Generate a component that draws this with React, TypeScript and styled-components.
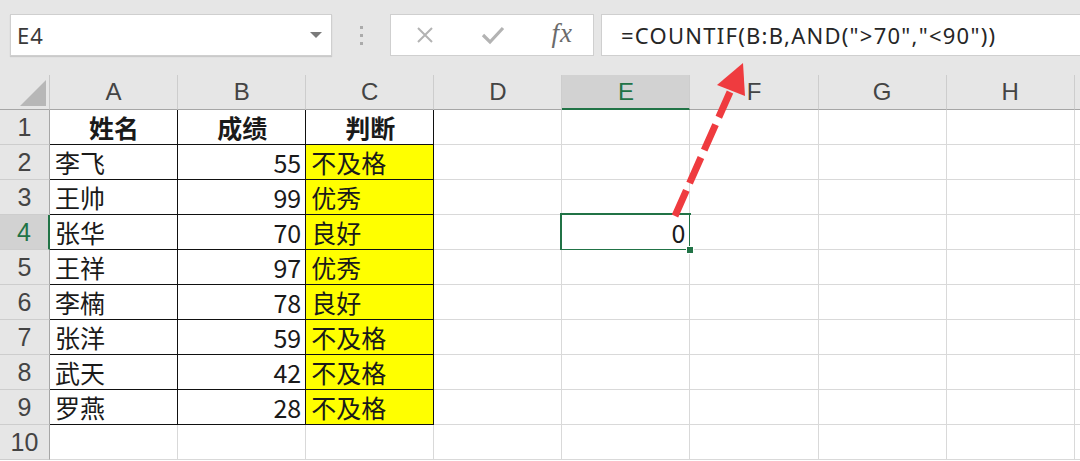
import React from 'react';
import styled, { createGlobalStyle, css } from 'styled-components';

const GlobalStyle = createGlobalStyle`
  html, body {
    margin: 0;
    padding: 0;
    background: #ffffff;
  }
  body {
    width: 1080px;
    height: 461px;
    overflow: hidden;
  }
`;

const GREEN = '#217346';
const GRID = '#d9d9d9';
const HEAD_LINE = '#a6a6a6';

const columns = ['A', 'B', 'C', 'D', 'E', 'F', 'G', 'H', ''];

type Row = { name: string; score: number | ''; grade: string };

const rows: Row[] = [
  { name: '李飞', score: 55, grade: '不及格' },
  { name: '王帅', score: 99, grade: '优秀' },
  { name: '张华', score: 70, grade: '良好' },
  { name: '王祥', score: 97, grade: '优秀' },
  { name: '李楠', score: 78, grade: '良好' },
  { name: '张洋', score: 59, grade: '不及格' },
  { name: '武天', score: 42, grade: '不及格' },
  { name: '罗燕', score: 28, grade: '不及格' },
];

const Page = styled.div`
  position: relative;
  width: 1080px;
  height: 461px;
  overflow: hidden;
  background: #ffffff;
`;

const Toolbar = styled.div`
  height: 75px;
  box-sizing: border-box;
  padding: 14px 0 0 10px;
  display: flex;
  align-items: flex-start;
  background: #e6e6e6;
`;

const Field = styled.div<{ $w?: number; $grow?: boolean }>`
  height: 42px;
  box-sizing: border-box;
  background: #ffffff;
  border: 1px solid #cfcfcf;
  display: flex;
  align-items: center;
  ${(p) => (p.$grow ? 'flex: 1;' : `width: ${p.$w}px; flex: none;`)}
`;

const NameBox = styled(Field)`
  justify-content: space-between;
  padding: 0 9px 0 6px;
  box-shadow: 0 1px 1px rgba(0, 0, 0, 0.12);
  font-family: 'Noto Sans', 'Open Sans', sans-serif;
  font-size: 22px;
  letter-spacing: 1px;
  color: #3a3a3a;
`;

const Caret = styled.span`
  width: 0;
  height: 0;
  border-left: 6px solid transparent;
  border-right: 6px solid transparent;
  border-top: 6px solid #7a7a7a;
`;

const Grip = styled.div`
  width: 58px;
  height: 42px;
  flex: none;
  display: flex;
  flex-direction: column;
  align-items: center;
  justify-content: center;
  gap: 5px;
`;

const GripDot = styled.span`
  width: 3px;
  height: 3px;
  background: #ababab;
`;

const IconBox = styled(Field)`
  justify-content: space-between;
  padding: 0 20px 0 24px;
  margin-right: 7px;
`;

const Fx = styled.span`
  font-family: 'Liberation Serif', 'DejaVu Serif', serif;
  font-style: italic;
  font-size: 27px;
  color: #6b6b6b;
  letter-spacing: 1px;
  margin-top: -4px;
`;

const Formula = styled(Field)`
  padding-left: 19px;
  border-right: none;
  font-family: 'Noto Sans', 'Open Sans', sans-serif;
  font-size: 22px;
  letter-spacing: 1.25px;
  color: #262626;
  white-space: nowrap;
`;

const Sheet = styled.div`
  display: grid;
  grid-template-columns: 50px repeat(9, 128.1px);
  grid-auto-rows: 35px;
`;

const Corner = styled.div`
  background: #e6e6e6;
  border-right: 1px solid #c8c8c8;
  border-bottom: 1px solid ${HEAD_LINE};
  display: flex;
  align-items: flex-end;
  justify-content: flex-end;
  padding: 0 3px 3px 0;
  box-sizing: border-box;
`;

const CornerTri = styled.span`
  width: 0;
  height: 0;
  border-left: 26px solid transparent;
  border-bottom: 26px solid #b7b7b7;
`;

const ColHead = styled.div<{ $sel?: boolean }>`
  box-sizing: border-box;
  background: ${(p) => (p.$sel ? '#d2d2d2' : '#e6e6e6')};
  border-right: 1px solid #cdcdcd;
  border-bottom: ${(p) => (p.$sel ? `2px solid ${GREEN}` : `1px solid ${HEAD_LINE}`)};
  color: ${(p) => (p.$sel ? GREEN : '#444444')};
  font-family: 'Liberation Sans', Arial, sans-serif;
  font-size: 24px;
  display: flex;
  align-items: center;
  justify-content: center;
  padding-top: ${(p) => (p.$sel ? '1px' : '0')};
`;

const RowHead = styled.div<{ $sel?: boolean }>`
  box-sizing: border-box;
  background: ${(p) => (p.$sel ? '#d2d2d2' : '#e6e6e6')};
  border-bottom: 1px solid #cdcdcd;
  border-right: ${(p) => (p.$sel ? `2px solid ${GREEN}` : `1px solid ${HEAD_LINE}`)};
  color: ${(p) => (p.$sel ? GREEN : '#444444')};
  font-family: 'Liberation Sans', Arial, sans-serif;
  font-size: 25px;
  display: flex;
  align-items: center;
  justify-content: center;
`;

const Cell = styled.div<{
  $align?: 'left' | 'right' | 'center';
  $bold?: boolean;
  $fill?: boolean;
  $boxed?: boolean;
  $sel?: boolean;
}>`
  position: relative;
  box-sizing: border-box;
  border-right: 1px solid ${(p) => (p.$boxed ? '#111111' : GRID)};
  border-bottom: 1px solid ${(p) => (p.$boxed ? '#111111' : GRID)};
  background: ${(p) => (p.$fill ? '#ffff00' : '#ffffff')};
  font-family: 'Noto Sans CJK SC', 'Noto Sans', sans-serif;
  font-size: 25px;
  font-weight: ${(p) => (p.$bold ? 700 : 400)};
  color: #1a1a1a;
  line-height: 34px;
  padding: 0 4px 0 5px;
  white-space: nowrap;
  text-align: ${(p) => p.$align || 'left'};
  ${(p) =>
    p.$sel &&
    css`
      &::after {
        content: '';
        position: absolute;
        left: -2px;
        top: -2px;
        right: -2px;
        bottom: -2px;
        border: 2px solid ${GREEN};
        pointer-events: none;
      }
      &::before {
        content: '';
        position: absolute;
        right: -5px;
        bottom: -5px;
        width: 6px;
        height: 6px;
        background: ${GREEN};
        border: 1px solid #ffffff;
        z-index: 2;
      }
    `}
`;

const Overlay = styled.svg`
  position: absolute;
  left: 0;
  top: 0;
  pointer-events: none;
`;

const XIcon = () => (
  <svg width="20" height="20" viewBox="0 0 20 20">
    <path d="M3 3 L17 17 M17 3 L3 17" stroke="#b3b3b3" strokeWidth="2" fill="none" />
  </svg>
);

const CheckIcon = () => (
  <svg width="24" height="20" viewBox="0 0 24 20">
    <path d="M2 10 L9 17 L22 3" stroke="#b3b3b3" strokeWidth="3.2" fill="none" />
  </svg>
);

const Arrow = () => (
  <Overlay width="1080" height="461" viewBox="0 0 1080 461">
    <line
      x1="675"
      y1="216"
      x2="730"
      y2="92"
      stroke="#ef3b3f"
      strokeWidth="7"
      strokeDasharray="28 8"
    />
    <polygon points="743,63 717,85 745,96" fill="#ef3b3f" />
  </Overlay>
);

const blankCells = (r: number) =>
  columns.slice(3).map((c, i) => (
    <Cell key={`${r}-${i}`} $align="right" $sel={c === 'E' && r === 4}>
      {c === 'E' && r === 4 ? '0' : ''}
    </Cell>
  ));

export default function App() {
  return (
    <Page>
      <GlobalStyle />
      <Toolbar>
        <NameBox $w={322}>
          <span>E4</span>
          <Caret />
        </NameBox>
        <Grip>
          <GripDot />
          <GripDot />
          <GripDot />
        </Grip>
        <IconBox $w={204}>
          <XIcon />
          <CheckIcon />
          <Fx>fx</Fx>
        </IconBox>
        <Formula $grow>=COUNTIF(B:B,AND("&gt;70","&lt;90"))</Formula>
      </Toolbar>
      <Sheet>
        <Corner>
          <CornerTri />
        </Corner>
        {columns.map((c, i) => (
          <ColHead key={`h${i}`} $sel={c === 'E'}>
            {c}
          </ColHead>
        ))}

        <RowHead>1</RowHead>
        <Cell $boxed $bold $align="center">姓名</Cell>
        <Cell $boxed $bold $align="center">成绩</Cell>
        <Cell $boxed $bold $align="center">判断</Cell>
        {blankCells(1)}

        {rows.map((row, i) => (
          <React.Fragment key={row.name}>
            <RowHead $sel={i + 2 === 4}>{i + 2}</RowHead>
            <Cell $boxed>{row.name}</Cell>
            <Cell $boxed $align="right">{row.score}</Cell>
            <Cell $boxed $fill>{row.grade}</Cell>
            {blankCells(i + 2)}
          </React.Fragment>
        ))}

        <RowHead>10</RowHead>
        <Cell />
        <Cell />
        <Cell />
        {blankCells(10)}
      </Sheet>
      <Arrow />
    </Page>
  );
}
